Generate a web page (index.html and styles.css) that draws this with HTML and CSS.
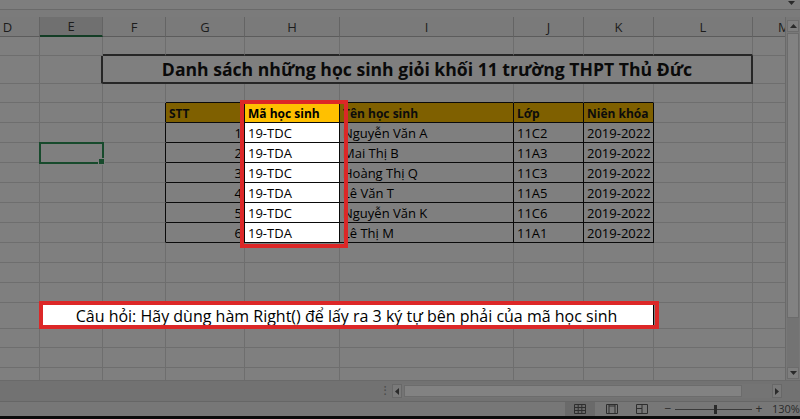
FILE: index.html
```html
<!DOCTYPE html>
<html lang="vi">
<head>
<meta charset="utf-8">
<title>Excel - Right()</title>
<link rel="stylesheet" href="styles.css">
</head>
<body>
<div class="app">
  <div class="fbar"><svg class="fx-arrow" width="7" height="4" viewBox="0 0 7 4"><path d="M0 0 L3.5 4 L7 0 Z" fill="#2a2a2a"/></svg></div>
  <div class="fgap"></div>
  <div class="main">
    <div class="sheet">
      <table class="grid">
        <colgroup>
          <col class="w64"><col class="w63"><col class="w63"><col class="w79"><col class="w95"><col class="w174"><col class="w70"><col class="w70"><col class="w99"><col class="w64">
        </colgroup>
        <thead>
          <tr class="colhdr"><th>D</th><th class="sel">E</th><th>F</th><th>G</th><th>H</th><th>I</th><th>J</th><th>K</th><th>L</th><th class="mcol">M</th></tr>
        </thead>
        <tbody>
          <tr class="h19"><td></td><td></td><td class="tb"></td><td class="tb"></td><td class="tb"></td><td class="tb"></td><td class="tb"></td><td class="tb"></td><td class="tb"></td><td></td></tr>
          <tr class="h28"><td></td><td class="tl"></td><td class="title" colspan="7">Danh sách những học sinh giỏi khối 11 trường THPT Thủ Đức</td><td></td></tr>
          <tr class="h19"><td></td><td></td><td></td><td class="bt"></td><td class="bt"></td><td class="bt"></td><td class="bt"></td><td class="bt"></td><td></td><td></td></tr>
          <tr class="h20"><td></td><td></td><td class="bl"></td><td class="th">STT</td><td class="th lit">Mã học sinh</td><td class="th">Tên học sinh</td><td class="th">Lớp</td><td class="th">Niên khóa</td><td></td><td></td></tr>
          <tr class="h20"><td></td><td></td><td class="bl"></td><td class="d num">1</td><td class="d lit">19-TDC</td><td class="d">Nguyễn Văn A</td><td class="d">11C2</td><td class="d">2019-2022</td><td></td><td></td></tr>
          <tr class="h20"><td></td><td class="selcell"></td><td class="bl"></td><td class="d num">2</td><td class="d lit">19-TDA</td><td class="d">Mai Thị B</td><td class="d">11A3</td><td class="d">2019-2022</td><td></td><td></td></tr>
          <tr class="h20"><td></td><td></td><td class="bl"></td><td class="d num">3</td><td class="d lit">19-TDC</td><td class="d">Hoàng Thị Q</td><td class="d">11C3</td><td class="d">2019-2022</td><td></td><td></td></tr>
          <tr class="h20"><td></td><td></td><td class="bl"></td><td class="d num">4</td><td class="d lit">19-TDA</td><td class="d">Lê Văn T</td><td class="d">11A5</td><td class="d">2019-2022</td><td></td><td></td></tr>
          <tr class="h20"><td></td><td></td><td class="bl"></td><td class="d num">5</td><td class="d lit">19-TDC</td><td class="d">Nguyễn Văn K</td><td class="d">11C6</td><td class="d">2019-2022</td><td></td><td></td></tr>
          <tr class="h20"><td></td><td></td><td class="bl"></td><td class="d num">6</td><td class="d lit">19-TDA</td><td class="d">Lê Thị M</td><td class="d">11A1</td><td class="d">2019-2022</td><td></td><td></td></tr>
          <tr class="h20"><td></td><td></td><td></td><td></td><td></td><td></td><td></td><td></td><td></td><td></td></tr>
          <tr class="h20"><td></td><td></td><td></td><td></td><td></td><td></td><td></td><td></td><td></td><td></td></tr>
          <tr class="h20"><td></td><td></td><td></td><td></td><td></td><td></td><td></td><td></td><td></td><td></td></tr>
          <tr class="h26"><td></td><td class="q" colspan="7">Câu hỏi: Hãy dùng hàm Right() để lấy ra 3 ký tự bên phải của mã học sinh</td><td></td><td></td></tr>
          <tr class="h19"><td></td><td></td><td></td><td></td><td></td><td></td><td></td><td></td><td></td><td></td></tr>
          <tr class="h20"><td></td><td></td><td></td><td></td><td></td><td></td><td></td><td></td><td></td><td></td></tr>
          <tr class="h20"><td></td><td></td><td></td><td></td><td></td><td></td><td></td><td></td><td></td><td></td></tr>
        </tbody>
      </table>
      <div class="spot spot-col"></div>
      <div class="spot spot-q"></div>
    </div>
    <div class="vscroll">
      <div class="sb-btn"><svg width="7" height="4" viewBox="0 0 7 4"><path d="M0 4 L3.5 0 L7 4 Z" fill="#2a2a2a"/></svg></div>
      <div class="vthumb"></div>
      <div class="vtrack"></div>
      <div class="sb-btn"><svg width="7" height="4" viewBox="0 0 7 4"><path d="M0 0 L3.5 4 L7 0 Z" fill="#2a2a2a"/></svg></div>
    </div>
  </div>
  <div class="hbar">
    <div class="tabs"></div>
    <div class="split">⁝</div>
    <div class="hbtn"><svg width="4" height="7" viewBox="0 0 4 7"><path d="M4 0 L0 3.5 L4 7 Z" fill="#2a2a2a"/></svg></div>
    <div class="htrack"><div class="hthumb"></div></div>
    <div class="hbtn"><svg width="4" height="7" viewBox="0 0 4 7"><path d="M0 0 L4 3.5 L0 7 Z" fill="#2a2a2a"/></svg></div>
    <div class="corner"></div>
  </div>
  <div class="status">
    <div class="view active">
      <svg width="12" height="10" viewBox="0 0 12 10"><path d="M0.5 0.5 H11.5 V9.5 H0.5 Z M4.2 0.5 V9.5 M7.8 0.5 V9.5 M0.5 3.5 H11.5 M0.5 6.5 H11.5" fill="none" stroke="#2e2e2e" stroke-width="1"/></svg>
    </div>
    <div class="view">
      <svg width="12" height="10" viewBox="0 0 12 10"><path d="M0.5 0.5 H11.5 V9.5 H0.5 Z M3 0.5 V9.5 M9 0.5 V9.5 M3 2 H9" fill="none" stroke="#2e2e2e" stroke-width="1"/></svg>
    </div>
    <div class="view">
      <svg width="12" height="10" viewBox="0 0 12 10"><path d="M0.5 0.5 H11.5 V9.5 H0.5 Z M0.5 4.5 H6 V9.5 M6 0.5 V4.5" fill="none" stroke="#2e2e2e" stroke-width="1"/></svg>
    </div>
    <div class="zoom">
      <span class="zsign">−</span>
      <div class="slider"><div class="knob"></div></div>
      <span class="zsign">+</span>
      <span class="zpct">130%</span>
    </div>
  </div>
  <div class="taskbar"></div>
</div>
</body>
</html>
```

FILE: styles.css
```css
* { box-sizing: border-box; }
html, body { margin: 0; padding: 0; }
body { background: #7f7f7f; font-family: "Open Sans", "Noto Sans", sans-serif; }

.app {
  width: 800px; height: 419px; overflow: hidden;
  display: flex; flex-direction: column;
  background: #7f7f7f;
}

.fbar { height: 10px; background: #7e7e7e; border-bottom: 1px solid #6a6a6a; display: flex; justify-content: flex-end; align-items: flex-start; }
.fx-arrow { margin: 1px 5px 0 0; }
.fgap { height: 7px; background: #7b7b7b; }

.main { height: 363px; display: flex; }
.sheet { width: 785px; height: 363px; overflow: hidden; position: relative; }

.grid {
  table-layout: fixed; width: 841px; margin-left: -24px;
  border-collapse: separate; border-spacing: 0;
  font-size: 13px; color: #000;
}
.w64 { width: 64px; } .w63 { width: 63px; } .w79 { width: 79px; } .w95 { width: 95px; }
.w174 { width: 174px; } .w70 { width: 70px; } .w99 { width: 99px; }

.grid td {
  padding: 0 3px; height: inherit;
  border-right: 1px solid #6e6e6e; border-bottom: 1px solid #6e6e6e;
  vertical-align: bottom; line-height: 17px; white-space: nowrap; overflow: hidden;
}

.colhdr { height: 19px; }
.colhdr th {
  background: #7a7a7a; font-weight: 400; color: #1c1c1c; font-size: 13px;
  border-right: 1px solid #646464; border-bottom: 1px solid #5c5c5c;
  padding: 0; line-height: 18px; text-align: center;
}
.colhdr th.sel { background: #707070; border-bottom: 2px solid #133d25; }
.colhdr th.mcol { text-align: left; padding-left: 25px; }

.h19 { height: 19px; } .h20 { height: 20px; } .h26 { height: 26px; } .h28 { height: 28px; }

.grid td.tb { border-bottom: 2px solid #262626; }
.grid td.tl { border-right: 2px solid #262626; }
.grid td.title {
  border-right: 2px solid #262626; border-bottom: 2px solid #262626;
  text-align: center; vertical-align: middle; font-weight: 700; font-size: 17.6px; line-height: 22px; color: #0a0a0a;
}
.grid td.bt { border-bottom: 1px solid #0a0a0a; }
.grid td.bl { border-right: 1px solid #0a0a0a; }
.grid td.th, .grid td.d { border-right: 1px solid #0a0a0a; border-bottom: 1px solid #0a0a0a; }
.grid td.th { background: #7f6000; font-weight: 700; font-size: 12px; color: #0c0c0c; }
.grid td.th.lit { background: #ffc000; color: #000; }
.grid td.d.lit { background: #ffffff; }
.grid td.num { text-align: right; padding-right: 2px; }

.grid td.selcell { position: relative; outline: 2px solid #174a2c; outline-offset: -1px; overflow: visible; }
.grid td.selcell::after {
  content: ""; position: absolute; right: -3px; bottom: -3px;
  width: 5px; height: 5px; background: #174a2c; border: 1px solid #7f7f7f;
}

.grid td.q {
  background: #fff; text-align: center; vertical-align: middle;
  font-size: 16px; line-height: 20px; color: #000;
  border-right: 1px solid #000;
}

.spot { position: absolute; border: 4px solid #dc2727; pointer-events: none; }
.spot-col { left: 240px; top: 83px; width: 108px; height: 148px; }
.spot-q { left: 39px; top: 284px; width: 620px; height: 28px; }

.vscroll {
  width: 15px; background: #787878; border-left: 1px solid #6a6a6a;
  display: flex; flex-direction: column; padding: 3px 1px 1px 1px;
}
.sb-btn { height: 12px; display: flex; align-items: center; justify-content: center; border: 1px solid #6c6c6c; background: #7f7f7f; }
.vthumb { height: 285px; background: #828282; border: 1px solid #6c6c6c; margin-top: 1px; }
.vtrack { flex: 1; background: #737373; }

.hbar { height: 22px; display: flex; align-items: center; background: #727272; border-top: 1px solid #6a6a6a; border-bottom: 1px solid #666; }
.tabs { width: 378px; height: 100%; }
.split { width: 14px; font-size: 12px; color: #4a4a4a; text-align: center; line-height: 14px; }
.hbtn { width: 10px; height: 14px; display: flex; align-items: center; justify-content: center; background: #7a7a7a; border: 1px solid #686868; }
.htrack { width: 370px; height: 14px; background: #747474; padding: 1px 30px 1px 2px; }
.hthumb { height: 100%; background: #828282; border: 1px solid #6c6c6c; }
.corner { flex: 1; }

.status { height: 14px; background: #777777; display: flex; justify-content: flex-end; align-items: center; padding-right: 0; }
.view { height: 14px; width: 30px; display: flex; align-items: center; justify-content: center; }
.view.active { background: #6a6a6a; margin-right: 2px; }
.zoom { display: flex; align-items: center; margin-left: 6px; }
.zsign { font-size: 12px; color: #2a2a2a; line-height: 12px; width: 10px; text-align: center; }
.slider { width: 77px; height: 1px; background: #3a3a3a; margin: 0 2px; position: relative; }
.knob { position: absolute; left: 39px; top: -4px; width: 3px; height: 9px; background: #2a2a2a; }
.zpct { font-size: 11px; color: #2a2a2a; margin-left: 8px; line-height: 12px; width: 28px; }

.taskbar { height: 3px; background: #0b0b0b; }
```
